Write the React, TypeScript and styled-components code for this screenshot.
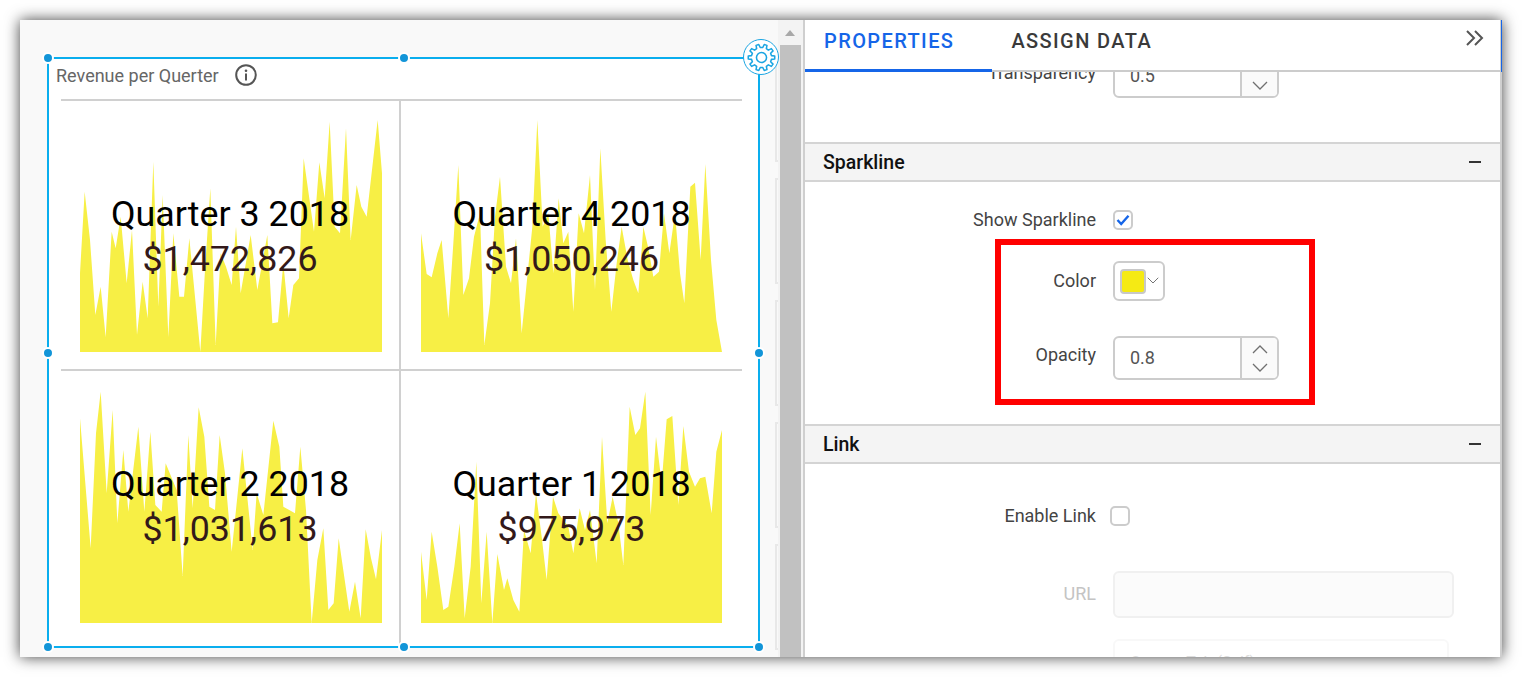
import React from 'react';
import styled, { createGlobalStyle } from 'styled-components';

const GlobalStyle = createGlobalStyle`
    html, body {
        margin: 0;
        background: #ffffff;
    }
    body {
        font-family: Roboto, "Liberation Sans", sans-serif;
    }
`;

type Quarter = {
    title: string;
    value: string;
    viewBox: string;
    width: number;
    points: number[][];
};

const quarters: Quarter[] = [
    {
        title: 'Quarter 3 2018',
        value: '$1,472,826',
        viewBox: '240 360 906 696',
        width: 302,
        points: [[240,1056],[240,820],[254,575],[270,720],[286,945],[302,860],[317,1012],[335,695],[347,745],[362,650],[380,850],[396,690],[411,1005],[428,845],[443,955],[460,485],[475,920],[488,585],[505,1012],[520,700],[538,890],[552,890],[568,715],[601,1056],[615,810],[631,565],[647,1035],[662,760],[678,800],[695,855],[708,680],[722,880],[752,705],[772,870],[802,705],[817,970],[834,967],[850,790],[866,955],[880,855],[897,835],[911,475],[942,695],[958,487],[974,595],[989,365],[1004,680],[1020,700],[1038,385],[1052,720],[1070,555],[1084,620],[1100,650],[1133,360],[1146,520],[1146,1056]],
    },
    {
        title: 'Quarter 4 2018',
        value: '$1,050,246',
        viewBox: '63 360 903 696',
        width: 301,
        points: [[63,1056],[63,700],[80,822],[95,832],[112,760],[125,720],[145,955],[160,730],[175,495],[190,885],[207,835],[222,710],[240,640],[253,1035],[270,910],[285,650],[300,530],[318,800],[333,850],[348,715],[365,1000],[380,850],[397,680],[412,360],[428,680],[445,640],[460,820],[476,595],[490,730],[505,695],[520,935],[536,640],[552,700],[570,525],[585,870],[601,445],[617,720],[634,935],[650,790],[665,680],[683,780],[700,840],[715,880],[730,680],[745,745],[760,830],[777,815],[792,640],[808,760],[825,640],[840,820],[853,910],[871,560],[885,548],[902,780],[916,492],[933,780],[949,960],[966,1056]],
    },
    {
        title: 'Quarter 2 2018',
        value: '$1,031,613',
        viewBox: '240 123 906 696',
        width: 302,
        points: [[240,819],[240,205],[272,595],[288,250],[302,125],[320,430],[338,180],[352,520],[370,300],[385,485],[415,230],[433,485],[451,245],[466,465],[485,485],[497,340],[530,420],[548,678],[565,255],[578,475],[596,172],[613,260],[628,470],[645,480],[659,255],[675,370],[695,605],[727,295],[758,600],[770,430],[790,495],[820,212],[838,290],[850,470],[885,490],[901,290],[918,480],[935,819],[952,630],[970,535],[985,780],[1001,760],[1016,565],[1048,785],[1065,695],[1082,805],[1097,538],[1113,625],[1128,688],[1146,540],[1146,819]],
    },
    {
        title: 'Quarter 1 2018',
        value: '$975,973',
        viewBox: '63 123 903 696',
        width: 301,
        points: [[63,819],[63,605],[80,750],[95,545],[112,650],[130,780],[145,770],[163,650],[179,520],[194,805],[212,650],[229,335],[244,760],[260,545],[277,819],[292,612],[312,720],[322,685],[340,750],[358,785],[372,540],[392,610],[408,430],[425,560],[440,690],[459,440],[475,490],[505,530],[520,610],[539,475],[555,540],[570,480],[590,640],[606,260],[622,520],[638,440],[655,520],[670,645],[689,170],[706,255],[720,235],[736,125],[752,495],[768,260],[785,400],[800,208],[817,198],[835,465],[850,228],[867,365],[885,410],[900,385],[916,380],[935,490],[949,305],[966,240],[966,819]],
    },
];

const handles = [
    [0, 0], [50, 0], [0, 50], [100, 50], [0, 100], [50, 100], [100, 100],
];

// gear outline for the widget settings button
const gearPath = (teeth: number, inner: number, outer: number) => {
    const step = (Math.PI * 2) / teeth;
    let d = '';
    for (let i = 0; i < teeth; i++) {
        const a = i * step;
        const pts: number[][] = [
            [inner, a - step * 0.3],
            [outer, a - step * 0.17],
            [outer, a + step * 0.17],
            [inner, a + step * 0.3],
        ];
        pts.forEach(([r, t], j) => {
            const x = (18 + r * Math.cos(t)).toFixed(2);
            const y = (18 + r * Math.sin(t)).toFixed(2);
            d += `${i === 0 && j === 0 ? 'M' : 'L'}${x} ${y} `;
        });
    }
    return d + 'Z';
};

const Chevron: React.FC<{ up?: boolean; size?: number }> = ({ up, size = 16 }) => (
    <svg width={size} height={size * 0.625} viewBox="0 0 16 10" fill="none" stroke="#707070" strokeWidth="1.3">
        <polyline points={up ? '1,9 8,2 15,9' : '1,1 8,8 15,1'} />
    </svg>
);

const App: React.FC = () => {
    return (
        <Page>
            <GlobalStyle />
            <Window>
                <Canvas>
                    <Widget>
                        {handles.map(([x, y]) => (
                            <Handle key={`${x}-${y}`} $x={x} $y={y} />
                        ))}
                        <GearButton>
                            <svg width="33" height="33" viewBox="0 0 36 36" fill="none" stroke="#1aa5e2" strokeWidth="1.7">
                                <path d={gearPath(10, 11, 14.5)} strokeLinejoin="round" />
                                <circle cx="18" cy="18" r="5.5" />
                            </svg>
                        </GearButton>
                        <WidgetTitle>
                            Revenue per Querter
                            <svg width="22" height="22" viewBox="0 0 22 22" fill="none">
                                <circle cx="11" cy="11" r="9.8" stroke="#555" strokeWidth="2" />
                                <circle cx="11" cy="6.8" r="1.3" fill="#555" />
                                <rect x="10" y="9.5" width="2" height="7" fill="#555" />
                            </svg>
                        </WidgetTitle>
                        <QuarterGrid>
                            {quarters.map((q, i) => (
                                <Cell key={q.title} $right={i % 2 === 1} $lower={i > 1}>
                                    <Spark width={q.width} height="232" viewBox={q.viewBox} preserveAspectRatio="none">
                                        <polygon points={q.points.map((p) => p.join(',')).join(' ')} fill="#f7ef45" />
                                    </Spark>
                                    <Overlay>
                                        <CellTitle>{q.title}</CellTitle>
                                        <CellValue>{q.value}</CellValue>
                                    </Overlay>
                                </Cell>
                            ))}
                        </QuarterGrid>
                    </Widget>
                </Canvas>
                <PeekColumn>
                    <PeekCard />
                    <PeekCard />
                    <PeekCard />
                    <PeekCard />
                    <PeekCard />
                </PeekColumn>
                <ScrollTrack>
                    <ScrollArrow />
                    <ScrollThumb />
                </ScrollTrack>
                <Panel>
                    <Tabs>
                        <Tab $active>PROPERTIES</Tab>
                        <Tab>ASSIGN DATA</Tab>
                        <Collapse>
                            <svg width="20" height="16" viewBox="0 0 20 16" fill="none" stroke="#555" strokeWidth="2">
                                <polyline points="2,1 9,8 2,15" />
                                <polyline points="10,1 17,8 10,15" />
                            </svg>
                        </Collapse>
                    </Tabs>
                    <PanelBody>
                        <ClippedBlock>
                            <Row>
                                <Label $lift={8}>Transparency</Label>
                                <Spinner>
                                    <SpinnerValue>0.5</SpinnerValue>
                                    <SpinnerButtons>
                                        <Chevron up />
                                        <Chevron />
                                    </SpinnerButtons>
                                </Spinner>
                            </Row>
                        </ClippedBlock>
                        <SectionHeader>
                            Sparkline
                            <Minus />
                        </SectionHeader>
                        <SectionBody $height={242}>
                            <Row $top={27}>
                                <Label>Show Sparkline</Label>
                                <CheckBox>
                                    <svg width="14" height="12" viewBox="0 0 14 12" fill="none" stroke="#1565e8" strokeWidth="2.4">
                                        <polyline points="1.5,6 5.2,10 12.5,1.8" />
                                    </svg>
                                </CheckBox>
                            </Row>
                            <Row $top={31}>
                                <Label $lift={2}>Color</Label>
                                <ColorPicker>
                                    <Swatch />
                                    <Chevron size={12} />
                                </ColorPicker>
                            </Row>
                            <Row $top={35}>
                                <Label $lift={8}>Opacity</Label>
                                <Spinner>
                                    <SpinnerValue>0.8</SpinnerValue>
                                    <SpinnerButtons>
                                        <Chevron up />
                                        <Chevron />
                                    </SpinnerButtons>
                                </Spinner>
                            </Row>
                        </SectionBody>
                        <SectionHeader>
                            Link
                            <Minus />
                        </SectionHeader>
                        <SectionBody $height={200}>
                            <Row $top={41}>
                                <Label>Enable Link</Label>
                                <CheckBox $shift />
                            </Row>
                            <Row $top={45}>
                                <Label $muted $lift={2}>URL</Label>
                                <DisabledInput $width={341} />
                            </Row>
                            <Row $top={21}>
                                <span />
                                <DisabledInput $width={336} $faint>Current Tab (Self)</DisabledInput>
                            </Row>
                        </SectionBody>
                    </PanelBody>
                    <Callout />
                </Panel>
            </Window>
        </Page>
    );
};

const Page = styled.div`
    box-sizing: border-box;
    width: 1522px;
    height: 677px;
    padding: 20px;
    overflow: hidden;
`;

const Window = styled.div`
    display: flex;
    width: 1482px;
    height: 637px;
    background: #ffffff;
    box-shadow: 0 0 14px rgba(0, 0, 0, 0.75);
    overflow: hidden;
`;

const Canvas = styled.div`
    box-sizing: border-box;
    width: 755px;
    padding: 37px 15px 0 27px;
    background: #f9f9f9;
`;

const Widget = styled.div`
    position: relative;
    box-sizing: border-box;
    height: 591px;
    display: flex;
    flex-direction: column;
    padding: 0 16px 0 12px;
    background: #ffffff;
    border: 2px solid #0aaeee;
`;

const Handle = styled.span<{ $x: number; $y: number }>`
    position: absolute;
    left: calc(${(p) => p.$x}% + ${(p) => (p.$x === 0 ? -1 : p.$x === 100 ? 1 : 0)}px);
    top: calc(${(p) => p.$y}% + ${(p) => (p.$y === 0 ? -1 : p.$y === 100 ? 1 : 0)}px);
    width: 8px;
    height: 8px;
    border-radius: 50%;
    background: #1295d8;
    border: 2px solid #ffffff;
    transform: translate(-50%, -50%);
    z-index: 2;
`;

const GearButton = styled.div`
    position: absolute;
    top: -20px;
    right: -21px;
    box-sizing: border-box;
    width: 36px;
    height: 36px;
    display: flex;
    align-items: center;
    justify-content: center;
    border: 1.5px solid #1aa5e2;
    border-radius: 50%;
    background: #ffffff;
    z-index: 3;
`;

const WidgetTitle = styled.div`
    display: flex;
    align-items: center;
    gap: 16px;
    height: 32px;
    margin: 0 0 8px -5px;
    font-size: 18px;
    color: #666666;
`;

const QuarterGrid = styled.div`
    flex: 1;
    display: grid;
    grid-template-columns: 340px 341px;
    grid-template-rows: 270px 277px;
`;

const Cell = styled.div<{ $right?: boolean; $lower?: boolean }>`
    position: relative;
    box-sizing: border-box;
    padding: ${(p) => (p.$lower ? 20 : 19)}px 0 0 ${(p) => (p.$right ? 20 : 19)}px;
    border-top: 2px solid #d0d0d0;
    border-right: ${(p) => (p.$right ? 'none' : '2px solid #d0d0d0')};
`;

const Spark = styled.svg`
    display: block;
`;

const Overlay = styled.div`
    position: absolute;
    top: 20px;
    left: 0;
    right: 0;
    height: 232px;
    display: flex;
    flex-direction: column;
    align-items: center;
    justify-content: center;
`;

const CellTitle = styled.div`
    font-size: 35.8px;
    line-height: 45px;
    color: #000000;
`;

const CellValue = styled.div`
    font-size: 35.8px;
    line-height: 45px;
    color: #33191a;
`;

const PeekColumn = styled.div`
    width: 3px;
    display: flex;
    flex-direction: column;
    gap: 16px;
    padding-top: 36px;
    background: #f9f9f9;
`;

const PeekCard = styled.div`
    flex: none;
    box-sizing: border-box;
    height: 106px;
    border: 2px solid #e8e8e8;
    border-right: none;
`;

const ScrollTrack = styled.div`
    box-sizing: border-box;
    width: 25px;
    display: flex;
    flex-direction: column;
    align-items: flex-start;
    padding: 10px 2px 0 2px;
    background: #f3f3f3;
`;

const ScrollArrow = styled.div`
    width: 0;
    height: 0;
    margin: 0 0 9px 5px;
    border-left: 5.5px solid transparent;
    border-right: 5.5px solid transparent;
    border-bottom: 6px solid #a8a8a8;
`;

const ScrollThumb = styled.div`
    flex: 1;
    width: 21px;
    background: #c1c1c1;
`;

const Panel = styled.div`
    position: relative;
    box-sizing: border-box;
    width: 699px;
    display: flex;
    flex-direction: column;
    background: #ffffff;
    border-left: 2px solid #cfcfcf;
    border-right: 2px solid #cfcfcf;
`;

const Tabs = styled.div`
    position: relative;
    flex: none;
    height: 52px;
    display: flex;
    box-shadow: inset 0 -2px 0 #cccccc;
    background: #ffffff;
    z-index: 1;
    &::after {
        content: '';
        position: absolute;
        top: 0;
        right: -2px;
        width: 1px;
        height: 52px;
        background: #1565e8;
    }
`;

const Tab = styled.div<{ $active?: boolean }>`
    box-sizing: border-box;
    height: 52px;
    display: flex;
    align-items: center;
    padding: 0 38px 7px 19px;
    font-size: 20px;
    font-weight: 500;
    letter-spacing: 1.4px;
    color: ${(p) => (p.$active ? '#1565e8' : '#3a3a3a')};
    border-bottom: 3px solid ${(p) => (p.$active ? '#1565e8' : 'transparent')};
`;

const Collapse = styled.div`
    margin-left: auto;
    padding: 10px 15px 0 0;
`;

const PanelBody = styled.div`
    flex: 1;
    overflow: hidden;
`;

const ClippedBlock = styled.div`
    height: 88px;
    margin-top: -18px;
`;

const SectionHeader = styled.div`
    box-sizing: border-box;
    height: 40px;
    display: flex;
    align-items: center;
    justify-content: space-between;
    padding: 0 19px 0 18px;
    font-size: 19.5px;
    font-weight: 500;
    color: #111111;
    background: #f4f4f4;
    border-top: 2px solid #d4d4d4;
    border-bottom: 2px solid #d4d4d4;
`;

const Minus = styled.span`
    width: 12px;
    height: 2px;
    background: #333333;
`;

const SectionBody = styled.div<{ $height: number }>`
    display: flow-root;
    height: ${(p) => p.$height}px;
`;

const Row = styled.div<{ $top?: number }>`
    display: grid;
    grid-template-columns: 291px 1fr;
    column-gap: 17px;
    align-items: center;
    margin-top: ${(p) => p.$top ?? 0}px;
`;

const Label = styled.div<{ $muted?: boolean; $lift?: number }>`
    text-align: right;
    font-size: 18px;
    padding-bottom: ${(p) => p.$lift ?? 0}px;
    color: ${(p) => (p.$muted ? '#c4c4c4' : '#444444')};
`;

const Spinner = styled.div`
    box-sizing: border-box;
    width: 166px;
    height: 44px;
    display: flex;
    border: 2px solid #cccccc;
    border-radius: 6px;
    background: #ffffff;
`;

const SpinnerValue = styled.div`
    flex: 1;
    display: flex;
    align-items: center;
    padding: 0 0 2px 15px;
    font-size: 18px;
    color: #555555;
`;

const SpinnerButtons = styled.div`
    width: 35px;
    display: flex;
    flex-direction: column;
    align-items: center;
    justify-content: center;
    gap: 9px;
    border-left: 2px solid #cccccc;
    border-radius: 0 4px 4px 0;
    background: #fafafa;
`;

const CheckBox = styled.div<{ $shift?: boolean }>`
    box-sizing: border-box;
    width: 20px;
    height: 20px;
    margin-left: ${(p) => (p.$shift ? -3 : 0)}px;
    display: flex;
    align-items: center;
    justify-content: center;
    border: 2px solid #cccccc;
    border-radius: 5px;
    background: #ffffff;
`;

const ColorPicker = styled.div`
    box-sizing: border-box;
    width: 52px;
    height: 40px;
    display: flex;
    align-items: center;
    gap: 1px;
    padding-left: 5px;
    border: 2px solid #cccccc;
    border-radius: 6px;
`;

const Swatch = styled.div`
    box-sizing: border-box;
    width: 26px;
    height: 25px;
    background: #f5ea14;
    border: 2px solid #c8c8c8;
    border-radius: 4px;
`;

const DisabledInput = styled.div<{ $width: number; $faint?: boolean }>`
    box-sizing: border-box;
    width: ${(p) => p.$width}px;
    height: 47px;
    display: flex;
    align-items: center;
    padding-left: 15px;
    font-size: 16px;
    color: #dddddd;
    background: ${(p) => (p.$faint ? '#ffffff' : '#fbfbfb')};
    border: 2px solid ${(p) => (p.$faint ? '#f8f8f8' : '#f0f0f0')};
    border-radius: 6px;
`;

const Callout = styled.div`
    position: absolute;
    left: 190px;
    top: 219px;
    box-sizing: border-box;
    width: 320px;
    height: 166px;
    border: 6px solid #ff0000;
    z-index: 2;
`;

export default App;
